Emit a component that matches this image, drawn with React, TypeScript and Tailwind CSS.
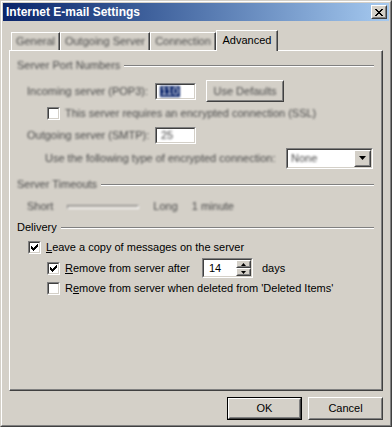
import React from 'react';

const blurText = 'blur-[1.1px] text-[#4a4a4a]';

function Raised({ className = '', children }: { className?: string; children?: React.ReactNode }) {
  return (
    <div className={`border border-t-white border-l-white border-r-[#404040] border-b-[#404040] bg-[#d4d0c8] ${className}`}>
      <div className="w-full h-full border border-t-[#d4d0c8] border-l-[#d4d0c8] border-r-[#808080] border-b-[#808080] flex items-center justify-center">
        {children}
      </div>
    </div>
  );
}

function Sunken({ className = '', children }: { className?: string; children?: React.ReactNode }) {
  return (
    <div className={`border border-t-[#808080] border-l-[#808080] border-r-white border-b-white shrink-0 ${className}`}>
      <div className="w-full h-full border border-t-[#404040] border-l-[#404040] border-r-[#d4d0c8] border-b-[#d4d0c8] bg-white flex items-center">
        {children}
      </div>
    </div>
  );
}

function CheckBox({ checked }: { checked?: boolean }) {
  return (
    <Sunken className="w-[13px] h-[13px]">
      {checked && (
        <svg width="9" height="9" viewBox="0 0 9 9" className="mx-auto">
          <path d="M1 3h1v1h1v1h1V4h1V3h1V2h1V1h1v3H7v1H6v1H5v1H4v1H3V7H2V6H1z" fill="black" />
        </svg>
      )}
    </Sunken>
  );
}

function GroupHeader({ label, blurred }: { label: string; blurred?: boolean }) {
  return (
    <div className="flex items-center h-[13px]">
      <span className={blurred ? blurText : ''}>{label}</span>
      <div className="ml-[4px] flex-1 border-t border-t-[#808080] border-b border-b-white" />
    </div>
  );
}

function Tab({ label, width, selected }: { label: string; width: string; selected?: boolean }) {
  if (selected) {
    return (
      <div className={`${width} h-[21px] bg-[#d4d0c8] border-t border-l border-r border-t-white border-l-white border-r-[#404040] shadow-[inset_-1px_0_#808080] flex items-center justify-center pb-[2px]`}>
        {label}
      </div>
    );
  }
  return (
    <div className={`${width} mt-[2px] h-[18px] border-t border-l border-r border-t-white border-l-white border-r-[#404040] shadow-[inset_-1px_0_#808080] flex items-center justify-center`}>
      <span className={blurText}>{label}</span>
    </div>
  );
}

export default function App() {
  return (
    <div className="w-[392px] h-[427px] bg-[#d4d0c8] font-['Liberation_Sans',Arial,sans-serif] text-[11px] text-black leading-none overflow-hidden">
      <div className="w-full h-full border border-t-[#d4d0c8] border-l-[#d4d0c8] border-r-[#404040] border-b-[#404040]">
        <div className="w-full h-full border border-t-white border-l-white border-r-[#808080] border-b-[#808080] p-[1px] flex flex-col">
          {/* Title bar */}
          <div className="h-[18px] bg-linear-to-r from-[#0a246a] to-[#a6caf0] flex items-center justify-between pl-[3px] pr-[2px]">
            <span className="text-white font-bold text-[12px]">Internet E-mail Settings</span>
            <Raised className="w-[16px] h-[14px]">
              <svg width="8" height="7" viewBox="0 0 8 7">
                <path d="M0 0h2v1h1v1h2V1h1V0h2v1H7v1H6v1H5v1h1v1h1v1h1v1H6V6H5V5H3v1H2v1H0V6h1V5h1V4h1V3H2V2H1V1H0z" fill="black" />
              </svg>
            </Raised>
          </div>

          {/* Body */}
          <div className="flex-1 flex flex-col px-[6px] pt-[9px]">
            <div className="flex h-[20px] pl-[2px] relative z-10">
              <Tab label="General" width="w-[49px]" />
              <Tab label="Outgoing Server" width="w-[90px]" />
              <Tab label="Connection" width="w-[66px]" />
              <Tab label="Advanced" width="w-[62px]" selected />
            </div>

            <div className="w-[374px] h-[341px] border border-t-white border-l-white border-r-[#404040] border-b-[#404040] shadow-[inset_-1px_-1px_#808080]">
              <div className="flex flex-col pl-[7px] pr-[8px] pt-[8px]">
                <GroupHeader label="Server Port Numbers" blurred />

                <div className="mt-[8px] h-[22px] flex items-center">
                  <span className={`ml-[10px] w-[128px] ${blurText}`}>Incoming server (POP3):</span>
                  <Sunken className="w-[41px] h-[17px]">
                    <span className="ml-[3px] px-[1px] h-[11px] bg-[#0a246a] text-white blur-[1px] flex items-center">110</span>
                  </Sunken>
                  <Raised className="ml-[10px] w-[78px] h-[22px]">
                    <span className={blurText}>Use Defaults</span>
                  </Raised>
                </div>

                <div className="mt-[3px] h-[17px] flex items-center">
                  <div className="ml-[30px]"><CheckBox /></div>
                  <span className={`ml-[5px] ${blurText}`}>This server requires an encrypted connection (SSL)</span>
                </div>

                <div className="mt-[5px] h-[17px] flex items-center">
                  <span className={`ml-[10px] w-[128px] ${blurText}`}>Outgoing server (SMTP):</span>
                  <Sunken className="w-[41px] h-[17px]">
                    <span className={`ml-[4px] ${blurText}`}>25</span>
                  </Sunken>
                </div>

                <div className="mt-[4px] h-[20px] flex items-center">
                  <span className={`ml-[28px] w-[241px] ${blurText}`}>Use the following type of encrypted connection:</span>
                  <Sunken className="w-[87px] h-[21px]">
                    <span className={`ml-[3px] flex-1 ${blurText}`}>None</span>
                    <Raised className="w-[17px] h-[17px]">
                      <svg width="7" height="4" viewBox="0 0 7 4"><path d="M0 0h7L3.5 4z" fill="black" /></svg>
                    </Raised>
                  </Sunken>
                </div>

                <div className="mt-[10px]">
                  <GroupHeader label="Server Timeouts" blurred />
                </div>

                <div className="mt-[9px] h-[13px] flex items-center">
                  <span className={`ml-[10px] ${blurText}`}>Short</span>
                  <div className="ml-[14px] w-[72px] h-[4px] border border-t-[#808080] border-l-[#808080] border-r-white border-b-white blur-[1px]" />
                  <span className={`ml-[14px] ${blurText}`}>Long</span>
                  <span className={`ml-[14px] ${blurText}`}>1 minute</span>
                </div>

                <div className="mt-[8px]">
                  <GroupHeader label="Delivery" />
                </div>

                <div className="mt-[6px] h-[15px] flex items-center">
                  <div className="ml-[11px]"><CheckBox checked /></div>
                  <span className="ml-[5px]"><span className="underline">L</span>eave a copy of messages on the server</span>
                </div>

                <div className="mt-[3px] h-[20px] flex items-center">
                  <div className="ml-[30px]"><CheckBox checked /></div>
                  <span className="ml-[5px] w-[137px]"><span className="underline">R</span>emove from server after</span>
                  <Sunken className="w-[51px] h-[20px]">
                    <span className="ml-[5px] flex-1">14</span>
                    <div className="flex flex-col w-[15px] h-full">
                      <Raised className="w-[15px] h-[8px]">
                        <svg width="5" height="3" viewBox="0 0 5 3"><path d="M2.5 0L5 3H0z" fill="black" /></svg>
                      </Raised>
                      <Raised className="w-[15px] h-[8px]">
                        <svg width="5" height="3" viewBox="0 0 5 3"><path d="M0 0h5L2.5 3z" fill="black" /></svg>
                      </Raised>
                    </div>
                  </Sunken>
                  <span className="ml-[9px]">days</span>
                </div>

                <div className="mt-[3px] h-[15px] flex items-center">
                  <div className="ml-[30px]"><CheckBox /></div>
                  <span className="ml-[5px]">R<span className="underline">e</span>move from server when deleted from 'Deleted Items'</span>
                </div>
              </div>
            </div>

            <div className="w-[374px] flex justify-end gap-[6px] mt-[6px]">
              <div className="border border-black">
                <Raised className="w-[73px] h-[21px]">OK</Raised>
              </div>
              <Raised className="w-[75px] h-[23px]">Cancel</Raised>
            </div>
          </div>
        </div>
      </div>
    </div>
  );
}
